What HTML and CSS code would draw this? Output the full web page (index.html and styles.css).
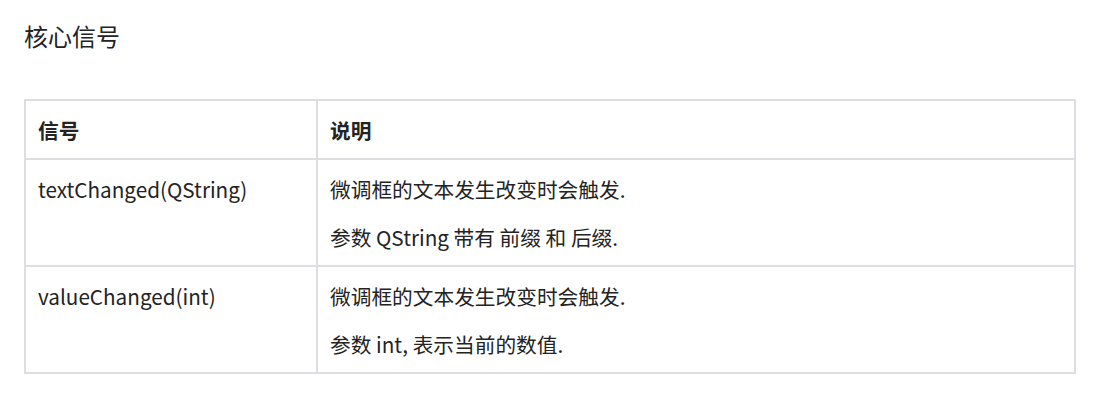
FILE: index.html
```html
<!DOCTYPE html>
<html lang="zh-CN">
<head>
<meta charset="utf-8">
<title>核心信号</title>
<link rel="stylesheet" href="styles.css">
</head>
<body>
<div class="page">
  <h3 class="title">核心信号</h3>
  <table class="sig-table">
    <thead>
      <tr><th class="col-sig">信号</th><th>说明</th></tr>
    </thead>
    <tbody>
      <tr>
        <td>textChanged(QString)</td>
        <td><p>微调框的文本发生改变时会触发.</p><p>参数 QString 带有 前缀 和 后缀.</p></td>
      </tr>
      <tr>
        <td>valueChanged(int)</td>
        <td><p>微调框的文本发生改变时会触发.</p><p>参数 int, 表示当前的数值.</p></td>
      </tr>
    </tbody>
  </table>
</div>
</body>
</html>
```
FILE: styles.css
```css
html, body {
  margin: 0;
  padding: 0;
  background: #ffffff;
}
.page {
  padding: 18px 24px;
  font-family: "Noto Sans CJK SC", "Noto Sans", sans-serif;
  color: #232323;
}
.title {
  margin: 0;
  font-size: 24px;
  line-height: 36px;
  font-weight: 400;
}
.sig-table {
  margin-top: 45px;
  width: 1052px;
  border-collapse: collapse;
  border: 2px solid #dedee2;
  font-size: 20.7px;
  line-height: 30px;
}
.sig-table th,
.sig-table td {
  border: 2px solid #dedee2;
  padding: 14px 12px 13px;
  text-align: left;
  vertical-align: top;
}
.sig-table th {
  font-weight: 700;
}
.col-sig {
  width: 266px;
}
.sig-table p {
  margin: 0;
}
.sig-table p + p {
  margin-top: 18px;
}
```
